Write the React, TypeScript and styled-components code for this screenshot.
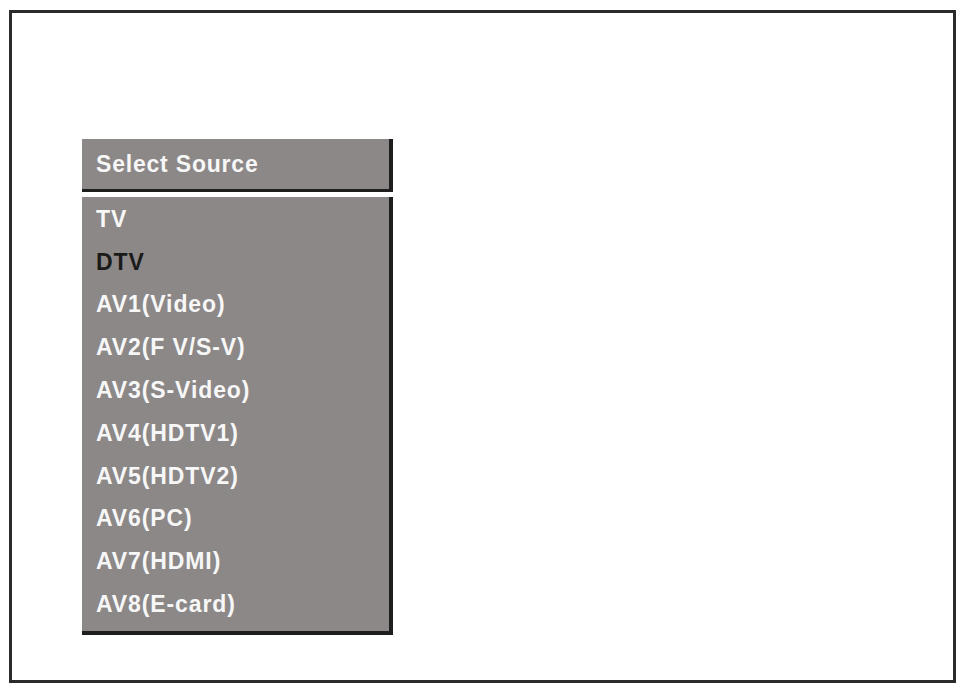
import React from "react";
import styled, { createGlobalStyle } from "styled-components";

const GlobalStyle = createGlobalStyle`
  html, body {
    margin: 0;
    padding: 0;
    background: #ffffff;
  }
  body {
    font-family: "Liberation Sans", Arial, sans-serif;
  }
`;

const Screen = styled.div`
  box-sizing: border-box;
  margin: 10px 0 0 9px;
  width: 947px;
  height: 673px;
  border: 3px solid #2b2b2b;
  background: #ffffff;
  padding: 126px 0 0 70px;
`;

const Menu = styled.div`
  display: flex;
  flex-direction: column;
  width: 311px;
`;

const Header = styled.div`
  box-sizing: border-box;
  height: 53px;
  background: #8c8888;
  border-right: 4px solid #1e1e1e;
  border-bottom: 3px solid #1e1e1e;
  display: flex;
  align-items: center;
  padding-left: 14px;
  padding-top: 1px;
  color: #f7f7f7;
  font-weight: 700;
  font-size: 23px;
  letter-spacing: 0.8px;
`;

const List = styled.ul`
  box-sizing: border-box;
  list-style: none;
  margin: 5px 0 0 0;
  padding: 1px 0 4px 0;
  height: 438px;
  background: #8c8888;
  border-right: 4px solid #1e1e1e;
  border-bottom: 4px solid #1e1e1e;
`;

const Item = styled.li<{ $active?: boolean }>`
  height: 42.8px;
  display: flex;
  align-items: center;
  padding-left: 14px;
  font-weight: 700;
  font-size: 23px;
  letter-spacing: 0.9px;
  color: ${(p) => (p.$active ? "#1a1a1a" : "#f7f7f7")};
`;

const sources = [
  "TV",
  "DTV",
  "AV1(Video)",
  "AV2(F V/S-V)",
  "AV3(S-Video)",
  "AV4(HDTV1)",
  "AV5(HDTV2)",
  "AV6(PC)",
  "AV7(HDMI)",
  "AV8(E-card)",
];

export default function App() {
  return (
    <>
      <GlobalStyle />
      <Screen>
        <Menu>
          <Header>Select Source</Header>
          <List>
            {sources.map((s) => (
              <Item key={s} $active={s === "DTV"}>
                {s}
              </Item>
            ))}
          </List>
        </Menu>
      </Screen>
    </>
  );
}
